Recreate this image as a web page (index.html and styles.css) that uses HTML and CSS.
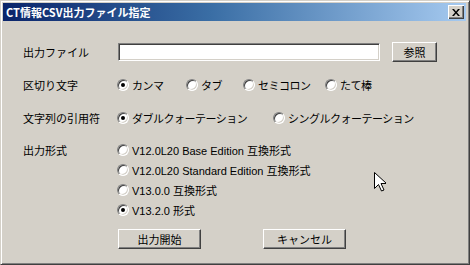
FILE: index.html
```html
<!DOCTYPE html>
<html lang="ja">
<head>
  <meta charset="UTF-8" />
  <title>CT情報CSV出力ファイル指定</title>
  <link rel="stylesheet" href="styles.css">
</head>
<body>
  <div class="window">
    <div class="title-bar">
      <span class="title-text">CT情報CSV出力ファイル指定</span>
      <button class="close-button" aria-label="閉じる">
        <svg width="8" height="7" viewBox="0 0 8 7"><path d="M0 0h2l2 2.5L6 0h2L5 3.5 8 7H6L4 4.5 2 7H0l3-3.5z" fill="#000"/></svg>
      </button>
    </div>

    <div class="dialog">
      <div class="row row-file">
        <span class="row-label">出力ファイル</span>
        <div class="file-group">
          <input type="text" class="file-input">
          <button class="win-button browse-button">参照</button>
        </div>
      </div>

      <div class="row row-sep">
        <span class="row-label">区切り文字</span>
        <div class="choice-line sep-choices">
          <label class="radio"><span class="radio-mark checked"></span>カンマ</label>
          <label class="radio"><span class="radio-mark"></span>タブ</label>
          <label class="radio"><span class="radio-mark"></span>セミコロン</label>
          <label class="radio"><span class="radio-mark"></span>たて棒</label>
        </div>
      </div>

      <div class="row row-quote">
        <span class="row-label">文字列の引用符</span>
        <div class="choice-line quote-choices">
          <label class="radio"><span class="radio-mark checked"></span>ダブルクォーテーション</label>
          <label class="radio"><span class="radio-mark"></span>シングルクォーテーション</label>
        </div>
      </div>

      <div class="row row-format">
        <span class="row-label">出力形式</span>
        <div class="choice-list">
          <label class="radio"><span class="radio-mark"></span>V12.0L20 Base Edition 互換形式</label>
          <label class="radio"><span class="radio-mark"></span>V12.0L20 Standard Edition 互換形式</label>
          <label class="radio"><span class="radio-mark"></span>V13.0.0 互換形式</label>
          <label class="radio"><span class="radio-mark checked"></span>V13.2.0 形式</label>
        </div>
      </div>

      <div class="row row-actions">
        <span class="row-label"></span>
        <div class="action-group">
          <button class="win-button action-button">出力開始</button>
          <button class="win-button action-button">キャンセル</button>
        </div>
      </div>
    </div>

    <svg class="mouse-cursor" width="12" height="20" viewBox="0 0 12 20">
      <path d="M0.5 0.5v16l4-4 3 6.5 2.5-1-3-6.5h5.5z" fill="#fff" stroke="#000" stroke-width="1"/>
    </svg>
  </div>
</body>
</html>
```

FILE: styles.css
```css
body {
  margin: 0;
  font-family: "Liberation Sans", "Noto Sans CJK JP", sans-serif;
  font-size: 11px;
  color: #000;
}
.window {
  position: relative;
  box-sizing: border-box;
  width: 470px;
  height: 265px;
  background: #d4d0c8;
  border: 1px solid;
  border-color: #d4d0c8 #404040 #404040 #d4d0c8;
  box-shadow: inset 1px 1px 0 #fff, inset -1px -1px 0 #808080;
  padding: 2px 3px 3px 2px;
}
.title-bar {
  display: flex;
  align-items: center;
  justify-content: space-between;
  height: 18px;
  padding: 0 2px 0 3px;
  background: linear-gradient(to right, #0a246a, #3a6ea5 45%, #a6caf0);
}
.title-text {
  color: #fff;
  font-weight: bold;
  font-family: "Noto Sans CJK JP", sans-serif;
  font-size: 11px;
  line-height: 18px;
}
.close-button {
  display: flex;
  align-items: center;
  justify-content: center;
  width: 16px;
  height: 14px;
  padding: 0;
  background: #d4d0c8;
  border: none;
  box-shadow: inset 1px 1px 0 #fff, inset -1px -1px 0 #404040, inset -2px -2px 0 #808080;
}
.dialog {
  display: flex;
  flex-direction: column;
  padding: 20px 0 0 20px;
}
.row {
  display: flex;
  align-items: center;
}
.row-label {
  width: 95px;
  flex: none;
  font-family: "Noto Sans CJK JP", sans-serif;
  font-size: 11px;
}
.row-sep {
  margin-top: 13px;
}
.row-quote {
  margin-top: 13px;
}
.row-format {
  margin-top: 12px;
  align-items: flex-start;
}
.row-format .row-label {
  line-height: 20px;
}
.row-actions {
  margin-top: 9px;
}
.file-group {
  display: flex;
  align-items: center;
  gap: 12px;
  height: 21px;
}
.file-input {
  box-sizing: border-box;
  width: 262px;
  height: 18px;
  margin: 0;
  background: #fff;
  border: 1px solid;
  border-color: #808080 #fff #fff #808080;
  box-shadow: inset 1px 1px 0 #404040, inset -1px -1px 0 #d4d0c8;
  outline: none;
}
.win-button {
  box-sizing: border-box;
  padding: 0;
  background: #d4d0c8;
  border: 1px solid;
  border-color: #fff #404040 #404040 #fff;
  box-shadow: inset -1px -1px 0 #808080;
  font-family: "Noto Sans CJK JP", sans-serif;
  font-size: 11px;
  color: #000;
}
.browse-button {
  width: 45px;
  height: 20px;
}
.choice-line {
  display: grid;
  height: 20px;
  align-items: center;
}
.sep-choices {
  grid-template-columns: 69px 57px 82px auto;
}
.quote-choices {
  grid-template-columns: 156px auto;
}
.choice-list {
  display: flex;
  flex-direction: column;
}
.choice-list .radio {
  height: 20px;
}
.radio {
  display: flex;
  align-items: center;
  gap: 3px;
  font-family: "Liberation Sans", "Noto Sans CJK JP", sans-serif;
  font-size: 11px;
  white-space: nowrap;
}
.choice-line .radio {
  letter-spacing: -0.5px;
}
.radio-mark {
  position: relative;
  box-sizing: border-box;
  width: 12px;
  height: 12px;
  margin-left: -1px;
  border-radius: 50%;
  background: #fff;
  border: 1px solid;
  border-color: #808080 #fff #fff #808080;
  box-shadow: inset 1px 1px 0 #404040, inset -1px -1px 0 #d4d0c8;
}
.radio-mark.checked::after {
  content: "";
  position: absolute;
  left: 3px;
  top: 3px;
  width: 4px;
  height: 4px;
  border-radius: 50%;
  background: #000;
}
.action-group {
  display: flex;
  gap: 62px;
}
.action-button {
  width: 83px;
  height: 20px;
}
.mouse-cursor {
  position: absolute;
  left: 373px;
  top: 171px;
}
```
